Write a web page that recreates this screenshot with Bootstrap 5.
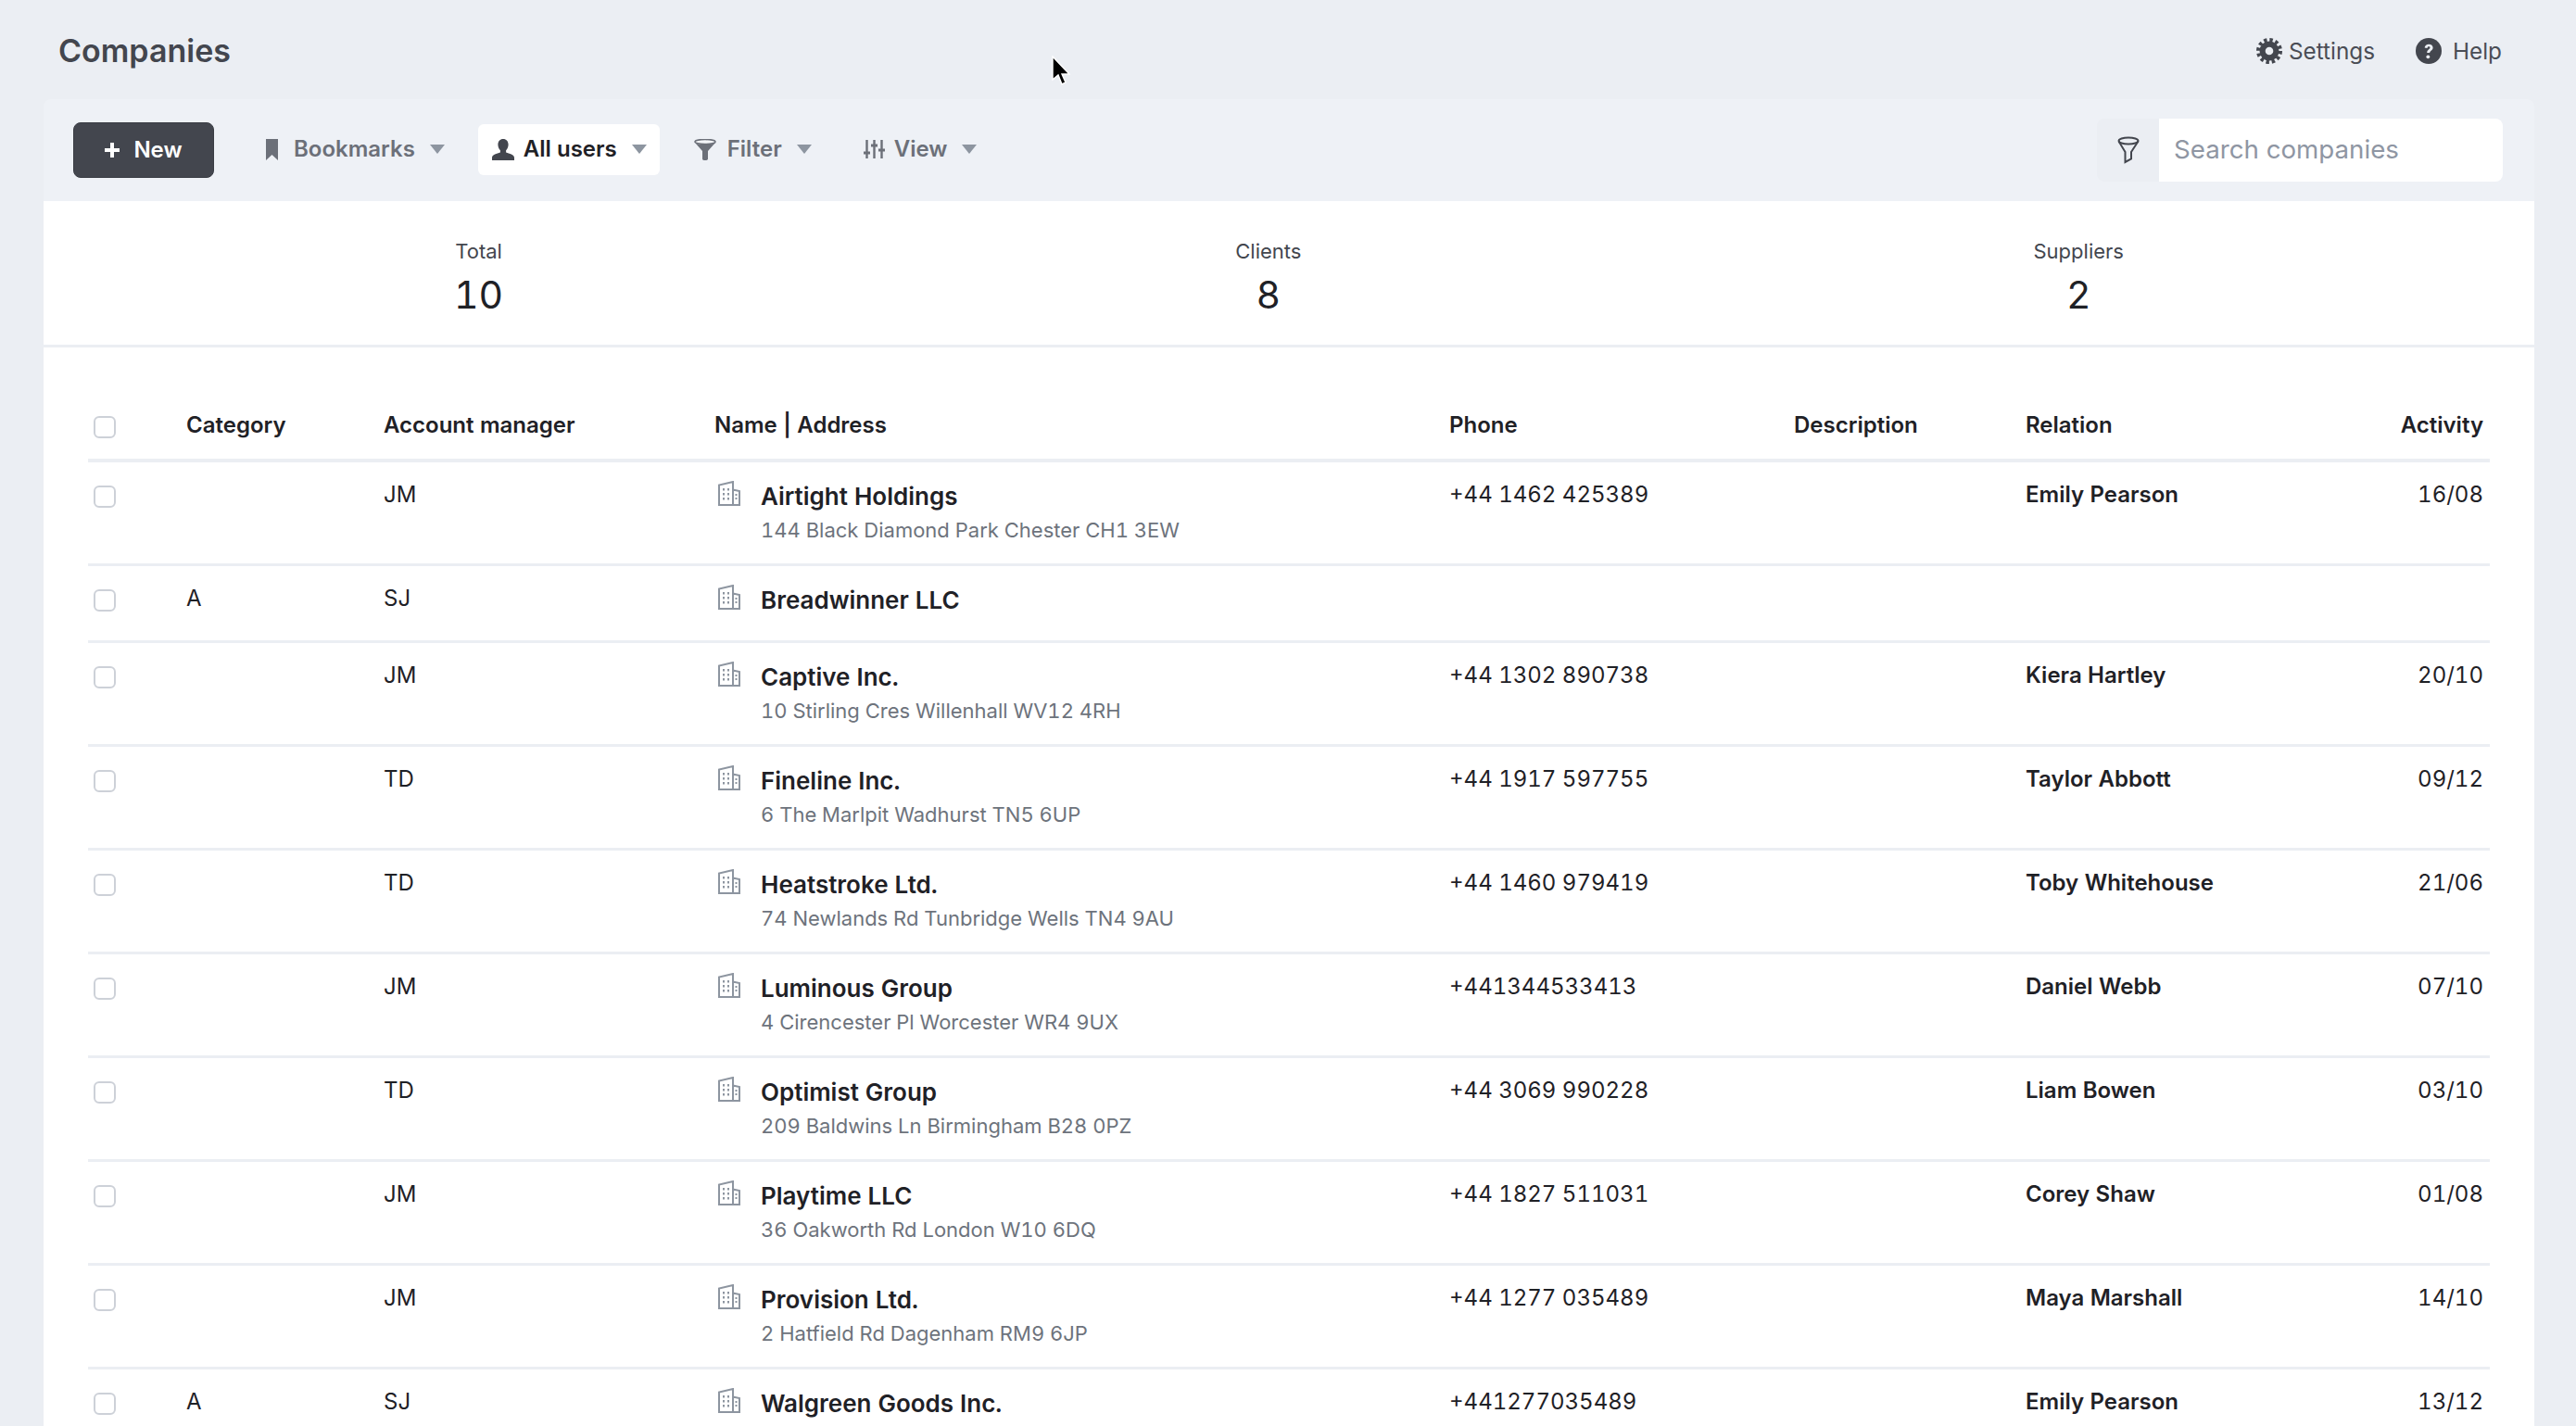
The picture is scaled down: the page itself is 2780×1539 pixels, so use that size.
<!DOCTYPE html>
<html lang="en">
<head>
<meta charset="utf-8">
<title>Companies</title>
<link href="https://cdn.jsdelivr.net/npm/bootstrap@5.3.0/dist/css/bootstrap.min.css" rel="stylesheet">
<style>
html,body{height:100%;overflow:hidden}
body{background:#ebeef3;font-family:Inter,"Liberation Sans",sans-serif;font-size:24px;color:#1f2126;position:relative;font-variant-numeric:tabular-nums}
.page-wrap{padding:0 45px 0 47px}
.top-head{height:107px;padding-top:3px}
.page-title{font-size:34px;font-weight:600;color:#43464e;margin:0 0 0 16px;line-height:1}
.top-link{color:#4a4d55;font-size:24.3px;text-decoration:none;display:inline-flex;align-items:center;gap:7px}
.top-link.help-link{gap:12px}
.top-links{gap:44px;margin-right:35px}
.tool-band{background:#eef1f6;height:110px;padding:0 32px;border-radius:8px 8px 0 0}
.btn-new{background:#43464e;border:1px solid #3a3d44;color:#fff;font-size:24px;font-weight:600;width:152px;height:60px;border-radius:8px;display:inline-flex;align-items:center;justify-content:center;gap:15px;padding:0;margin-top:-1px}
.btn-new:hover{background:#43464e;color:#fff}
.tool-items{margin-left:39px;gap:22px}
.tool-btn{font-size:24px;font-weight:600;color:#6c7079;border:0;height:55px;padding:0 14px 0 15px;border-radius:6px;display:inline-flex;align-items:center;gap:10px;margin-top:-2px}
.tool-btn.dropdown-toggle::after{border-top:10px solid #8d95a0;border-left:8px solid transparent;border-right:8px solid transparent;border-bottom:0;margin-left:6px;vertical-align:middle}
.tool-btn.is-active{background:#fff;color:#1f2126}
.bm-icon{margin:0 7px 0 2px}
.fl-icon{margin-right:2px}
.fl-btn{margin-right:5px}
.search-group{width:438px;height:68px;margin-right:2px}
.search-addon{background:#ebeef3;border:0;width:68px;justify-content:center;padding:0;border-radius:8px 0 0 8px}
.search-input{border:0;font-size:27.7px;padding:0 16px;border-radius:0 8px 8px 0;color:#1f2126}
.search-input::placeholder{color:#8f96a3}
.main-panel{background:#fff}
.stat-band{height:158px;padding:0 48px 2px;border-bottom:3px solid #ebeef3;text-align:center}
.stat-label{font-size:22px;line-height:1;color:#43464e;margin-top:12px}
.stat-num{font-size:41px;line-height:1;color:#1f2126;margin-top:16px}
.table-zone{padding:66px 48px 0 48px}
.co-table{table-layout:fixed;width:2592px;margin:0;font-size:24px;color:#1f2126;border-collapse:collapse}
.co-table th{font-weight:600;padding:0 7px 18px;line-height:36px;border-bottom:4px solid #ebeef3;color:#1f2126}
.co-table td{padding:17px 7px 21px;line-height:36px;border-bottom:3px solid #ebeef3;height:83px;vertical-align:top;color:#1f2126}
.co-table .form-check-input{width:24px;height:24px;margin:0;border:2px solid #cdd1d8;border-radius:6px;display:block}
.check-cell{padding-left:6px!important}
.th-check{padding-bottom:22px!important}
.td-check{padding-top:25px!important}
.b-icon{width:24px;height:27px;flex:none;margin:3px 0 0 4px}
.co-name{font-size:26px;font-weight:600;line-height:36px;margin-top:2px}
.co-addr{font-size:22px;line-height:30px;color:#6d737c;margin-top:3px}
.name-stack{margin-left:22px}
.rel-name{font-weight:600}
.cursor-mark{position:absolute;left:1135px;top:60px;width:20px;height:32px}
</style>
</head>
<body>
<div class="page-wrap">
  <header class="top-head d-flex align-items-center justify-content-between">
    <h1 class="page-title">Companies</h1>
    <div class="top-links d-flex align-items-center">
      <a class="top-link" href="#">
        <svg width="28" height="28" viewBox="0 0 28 28"><circle cx="14" cy="14" r="10.500" fill="#43464e"/><circle cx="14" cy="14" r="12" fill="none" stroke="#43464e" stroke-width="4" stroke-dasharray="3.400 2.883"/><circle cx="14" cy="14" r="4.300" fill="#ebeef3"/></svg>
        <span>Settings</span>
      </a>
      <a class="top-link help-link" href="#">
        <svg width="28" height="28" viewBox="0 0 28 28"><circle cx="14" cy="14" r="14" fill="#43464e"/><path d="M9.6 10.6c.3-2.5 2.2-3.8 4.6-3.8 2.6 0 4.4 1.5 4.4 3.7 0 3-3.4 3.2-3.4 5.6h-3c0-3.6 3.3-3.8 3.3-5.500 0-.8-.6-1.300-1.400-1.300-1 0-1.500.6-1.600 1.600z" fill="#ebeef3"/><circle cx="13.300" cy="20.300" r="1.900" fill="#ebeef3"/></svg>
        <span>Help</span>
      </a>
    </div>
  </header>

  <div class="tool-band d-flex align-items-center justify-content-between">
    <div class="d-flex align-items-center">
      <button class="btn btn-new" type="button">
        <svg width="16" height="16" viewBox="0 0 16 16"><path d="M6 0h4v6h6v4h-6v6H6v-6H0V6h6z" fill="#fff"/></svg>
        <span>New</span>
      </button>
      <div class="tool-items d-flex align-items-center">
        <button class="btn tool-btn dropdown-toggle" type="button">
          <svg class="bm-icon" width="13" height="23" viewBox="0 0 13 23" fill="#6c7079"><path d="M0 0h13v23l-6.500-6L0 23z"/></svg>
          <span>Bookmarks</span>
        </button>
        <button class="btn tool-btn is-active dropdown-toggle" type="button">
          <svg width="24" height="23" viewBox="0 0 24 23" fill="#43464e"><path d="M12 0c3.400 0 5.600 2.600 5.600 6 0 2.600-1 4.700-2.500 6.200v2.200c3.600 1.200 8.900 2.500 8.900 5.600V23H0v-3c0-3.100 5.300-4.400 8.900-5.600v-2.200C7.400 10.700 6.400 8.600 6.400 6c0-3.400 2.200-6 5.600-6z"/></svg>
          <span>All users</span>
        </button>
        <button class="btn tool-btn fl-btn dropdown-toggle" type="button">
          <svg class="fl-icon" width="24" height="23" viewBox="0 0 24 23"><ellipse cx="12" cy="3" rx="11" ry="2.500" fill="#f4f6f9" stroke="#6c7079" stroke-width="1.600"/><path d="M1.500 4.500c3 1.800 18 1.800 21 0L15 13v8.500c0 2-6 2-6 0V13z" fill="#6c7079"/></svg>
          <span>Filter</span>
        </button>
        <button class="btn tool-btn dropdown-toggle" type="button">
          <svg width="23" height="20" viewBox="0 0 23 20" fill="none" stroke="#6c7079" stroke-width="2.400"><path d="M3.500 0v20M11.500 0v20M19.500 0v20"/><path d="M0 14h7M8 6h7M16 11h7" stroke-width="3"/></svg>
          <span>View</span>
        </button>
      </div>
    </div>
    <div class="input-group search-group">
      <span class="input-group-text search-addon">
        <svg width="24" height="30" viewBox="0 0 24 30" fill="none" stroke="#43464e" stroke-width="2"><ellipse cx="12" cy="5" rx="10.500" ry="3.500"/><path d="M1.500 5.500L8.500 17v11l6.500-3.500V17L22.500 5.500"/></svg>
      </span>
      <input class="form-control search-input" type="text" placeholder="Search companies">
    </div>
  </div>

  <div class="main-panel">
    <div class="stat-band d-flex justify-content-around align-items-center">
      <div><div class="stat-label">Total</div><div class="stat-num">10</div></div>
      <div><div class="stat-label">Clients</div><div class="stat-num">8</div></div>
      <div><div class="stat-label">Suppliers</div><div class="stat-num">2</div></div>
    </div>
    <div class="table-zone">
      <table class="table co-table">
        <colgroup>
          <col style="width:99px"><col style="width:213px"><col style="width:357px"><col style="width:793px"><col style="width:372px"><col style="width:250px"><col style="width:320px"><col style="width:188px">
        </colgroup>
        <thead>
          <tr>
            <th class="check-cell th-check"><input class="form-check-input" type="checkbox" aria-label="Select all"></th>
            <th>Category</th><th>Account manager</th><th>Name | Address</th><th>Phone</th><th>Description</th><th>Relation</th><th class="text-end">Activity</th>
          </tr>
        </thead>
        <tbody id="rows"></tbody>
      </table>
    </div>
  </div>
</div>

<svg class="cursor-mark" viewBox="0 0 20 32"><path d="M1 1v25l6-5 4 10 4-2-4-9h8z" fill="#000" stroke="#fff" stroke-width="1.400"/></svg>

<script>
var data=[
["","JM","Airtight Holdings","144 Black Diamond Park Chester CH1 3EW","+44 1462 425389","Emily Pearson","16/08"],
["A","SJ","Breadwinner LLC","","","",""],
["","JM","Captive Inc.","10 Stirling Cres Willenhall WV12 4RH","+44 1302 890738","Kiera Hartley","20/10"],
["","TD","Fineline Inc.","6 The Marlpit Wadhurst TN5 6UP","+44 1917 597755","Taylor Abbott","09/12"],
["","TD","Heatstroke Ltd.","74 Newlands Rd Tunbridge Wells TN4 9AU","+44 1460 979419","Toby Whitehouse","21/06"],
["","JM","Luminous Group","4 Cirencester Pl Worcester WR4 9UX","+441344533413","Daniel Webb","07/10"],
["","TD","Optimist Group","209 Baldwins Ln Birmingham B28 0PZ","+44 3069 990228","Liam Bowen","03/10"],
["","JM","Playtime LLC","36 Oakworth Rd London W10 6DQ","+44 1827 511031","Corey Shaw","01/08"],
["","JM","Provision Ltd.","2 Hatfield Rd Dagenham RM9 6JP","+44 1277 035489","Maya Marshall","14/10"],
["A","SJ","Walgreen Goods Inc.","","+441277035489","Emily Pearson","13/12"]
];
var icon='<svg class="b-icon" viewBox="0 0 24 27" fill="none" stroke="#8d95a0" stroke-width="2"><path d="M1 26V4.500L16 1V26M16 9.500L23 11V26M0 26H24"/><path d="M6 8v2.500M6 13v2.500M6 18v2.500M11 8v2.500M11 13v2.500M11 18v2.500M19.500 14v2M19.500 18v2"/></svg>';
document.getElementById('rows').innerHTML=data.map(function(r){
return '<tr><td class="check-cell td-check"><input class="form-check-input" type="checkbox" aria-label="Select"></td><td>'+r[0]+'</td><td>'+r[1]+'</td><td><div class="d-flex">'+icon+'<div class="name-stack"><div class="co-name">'+r[2]+'</div>'+(r[3]?'<div class="co-addr">'+r[3]+'</div>':'')+'</div></div></td><td>'+r[4]+'</td><td></td><td class="rel-name">'+r[5]+'</td><td class="text-end">'+r[6]+'</td></tr>';
}).join('');
</script>
<script src="https://cdn.jsdelivr.net/npm/bootstrap@5.3.0/dist/js/bootstrap.bundle.min.js"></script>
</body>
</html>
